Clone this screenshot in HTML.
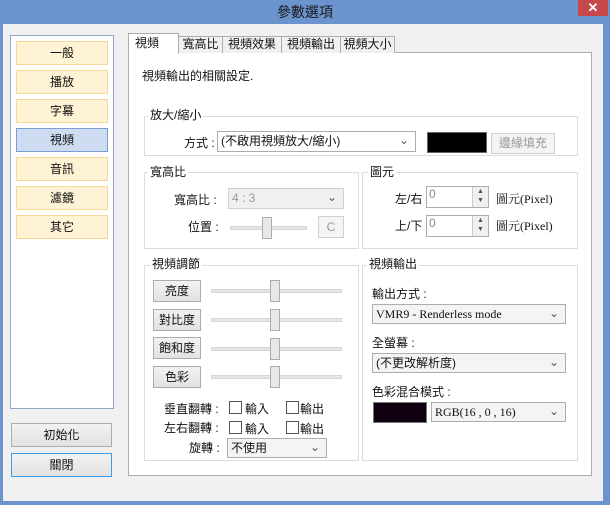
<!DOCTYPE html>
<html><head><meta charset="utf-8"><style>
*{box-sizing:border-box;margin:0;padding:0}
body{width:610px;height:505px;background:#6b93cd;font-family:"Liberation Sans","Noto Sans CJK TC",sans-serif;font-size:12px;color:#111;position:relative;overflow:hidden}
.a{position:absolute}
.content{left:3px;top:24px;width:600px;height:477px;background:#f0f0f0}
.title{left:0;top:0;width:610px;height:24px;text-align:center;line-height:24px;font-size:14px;color:#1a1a1a}
.close{left:578px;top:0;width:30px;height:16px;background:#c7484a;color:#fff;text-align:center;line-height:15px;font-size:13px;font-weight:bold}
.side{left:10px;top:35px;width:104px;height:374px;background:#fff;border:1px solid #8fa5c6}
.sb{left:16px;width:92px;height:24px;background:#fff3d5;border:1px solid #f6d89c;text-align:center;line-height:22px}
.sb.sel{background:#cddcf1;border-color:#7b9fd5}
.btn{background:linear-gradient(#f2f2f2,#e2e2e2);border:1px solid #acacac;text-align:center}
.panel{left:128px;top:52px;width:464px;height:424px;background:#fff;border:1px solid #adadad}
.tab{top:36px;height:17px;border:1px solid #adadad;border-bottom:none;background:#f0f0f0;text-align:center;line-height:15px}
.tab.sel{top:33px;height:21px;background:#fff;z-index:2;text-align:left;padding-left:6px;line-height:18px}
.grp{border:1px solid #dcdcdc}
.gl{background:#fff;padding:0 2px;line-height:14px}
.sel2{background:#fff;border:1px solid #adadad;padding-left:3px;line-height:18px}
.sel2:after{content:"⌄";position:absolute;right:6px;top:-1px;font-size:12px;color:#555}
.dis{background:#f0f0f0;border-color:#d0d0d0;color:#999}
.track{height:4px;background:#e6e6e6;border:1px solid #d6d6d6}
.thumb{width:10px;height:22px;background:#e8e8e8;border:1px solid #acacac}
.cb{width:13px;height:13px;border:1px solid #555;background:#fff}
.serif{font-family:"Liberation Serif","Noto Serif CJK SC",serif}
</style></head><body>
<div class="a title">參數選項</div>
<div class="a close">✕</div>
<div class="a content"></div>
<div class="a side"></div>
<div class="a sb" style="top:41px">一般</div>
<div class="a sb" style="top:70px">播放</div>
<div class="a sb" style="top:99px">字幕</div>
<div class="a sb sel" style="top:128px">視頻</div>
<div class="a sb" style="top:157px">音訊</div>
<div class="a sb" style="top:186px">濾鏡</div>
<div class="a sb" style="top:215px">其它</div>
<div class="a btn" style="left:11px;top:423px;width:101px;height:24px;line-height:22px">初始化</div>
<div class="a btn" style="left:11px;top:453px;width:101px;height:24px;line-height:22px;border-color:#3d9be9">關閉</div>

<div class="a panel"></div>
<div class="a tab sel" style="left:128px;width:51px">視頻</div>
<div class="a tab" style="left:178px;width:45px">寬高比</div>
<div class="a tab" style="left:222px;width:60px">視頻效果</div>
<div class="a tab" style="left:281px;width:60px">視頻輸出</div>
<div class="a tab" style="left:340px;width:55px">視頻大小</div>

<div class="a" style="left:142px;top:67px">視頻輸出的相關設定.</div>

<div class="a grp" style="left:144px;top:116px;width:434px;height:40px"></div>
<div class="a gl" style="left:148px;top:108px">放大/縮小</div>
<div class="a" style="left:184px;top:134px">方式 :</div>
<div class="a sel2" style="left:217px;top:131px;width:199px;height:21px">(不啟用視頻放大/縮小)</div>
<div class="a" style="left:427px;top:132px;width:60px;height:21px;background:#000;border:1px solid #666"></div>
<div class="a btn dis" style="left:491px;top:133px;width:64px;height:21px;line-height:19px;background:#f4f4f4">邊緣填充</div>

<div class="a grp" style="left:144px;top:172px;width:215px;height:77px"></div>
<div class="a gl" style="left:148px;top:165px">寬高比</div>
<div class="a" style="left:174px;top:191px">寬高比 :</div>
<div class="a sel2 dis" style="left:228px;top:188px;width:116px;height:21px">4 : 3</div>
<div class="a" style="left:188px;top:218px">位置 :</div>
<div class="a track" style="left:230px;top:226px;width:77px"></div>
<div class="a thumb" style="left:262px;top:217px"></div>
<div class="a btn dis" style="left:318px;top:216px;width:26px;height:22px;line-height:20px;background:#f4f4f4">C</div>

<div class="a grp" style="left:362px;top:172px;width:216px;height:77px"></div>
<div class="a gl" style="left:368px;top:165px">圖元</div>
<div class="a" style="left:395px;top:190px">左/右 :</div>
<div class="a" style="left:426px;top:186px;width:63px;height:22px;border:1px solid #adadad;background:#fff;color:#888;padding-left:2px;line-height:14px">0</div>
<div class="a" style="left:472px;top:187px;width:16px;height:20px;background:#f0f0f0;border-left:1px solid #ccc;font-size:7px;text-align:center;line-height:9px;color:#555">▲<br>▼</div>
<div class="a serif" style="left:496px;top:190px">圖元(Pixel)</div>
<div class="a" style="left:395px;top:217px">上/下 :</div>
<div class="a" style="left:426px;top:215px;width:63px;height:22px;border:1px solid #adadad;background:#fff;color:#888;padding-left:2px;line-height:14px">0</div>
<div class="a" style="left:472px;top:216px;width:16px;height:20px;background:#f0f0f0;border-left:1px solid #ccc;font-size:7px;text-align:center;line-height:9px;color:#555">▲<br>▼</div>
<div class="a serif" style="left:496px;top:217px">圖元(Pixel)</div>

<div class="a grp" style="left:144px;top:265px;width:215px;height:196px"></div>
<div class="a gl" style="left:150px;top:257px">視頻調節</div>
<div class="a btn" style="left:153px;top:280px;width:48px;height:22px;line-height:20px">亮度</div>
<div class="a btn" style="left:153px;top:309px;width:48px;height:22px;line-height:20px">對比度</div>
<div class="a btn" style="left:153px;top:337px;width:48px;height:22px;line-height:20px">飽和度</div>
<div class="a btn" style="left:153px;top:366px;width:48px;height:22px;line-height:20px">色彩</div>
<div class="a track" style="left:211px;top:289px;width:131px"></div>
<div class="a track" style="left:211px;top:318px;width:131px"></div>
<div class="a track" style="left:211px;top:347px;width:131px"></div>
<div class="a track" style="left:211px;top:375px;width:131px"></div>
<div class="a thumb" style="left:270px;top:280px"></div>
<div class="a thumb" style="left:270px;top:309px"></div>
<div class="a thumb" style="left:270px;top:338px"></div>
<div class="a thumb" style="left:270px;top:366px"></div>
<div class="a" style="left:164px;top:400px">垂直翻轉 :</div>
<div class="a cb" style="left:229px;top:401px"></div><div class="a" style="left:245px;top:400px">輸入</div>
<div class="a cb" style="left:286px;top:401px"></div><div class="a" style="left:300px;top:400px">輸出</div>
<div class="a" style="left:164px;top:419px">左右翻轉 :</div>
<div class="a cb" style="left:229px;top:421px"></div><div class="a" style="left:245px;top:420px">輸入</div>
<div class="a cb" style="left:286px;top:421px"></div><div class="a" style="left:300px;top:420px">輸出</div>
<div class="a" style="left:189px;top:439px">旋轉 :</div>
<div class="a sel2" style="left:227px;top:438px;width:100px;height:20px;background:#f4f4f4">不使用</div>

<div class="a grp" style="left:362px;top:265px;width:216px;height:196px"></div>
<div class="a gl" style="left:367px;top:257px">視頻輸出</div>
<div class="a" style="left:372px;top:285px">輸出方式 :</div>
<div class="a sel2 serif" style="left:372px;top:304px;width:194px;height:20px;background:#f4f4f4">VMR9 - Renderless mode</div>
<div class="a" style="left:372px;top:334px">全螢幕 :</div>
<div class="a sel2" style="left:372px;top:353px;width:194px;height:20px;background:#f4f4f4">(不更改解析度)</div>
<div class="a" style="left:372px;top:383px">色彩混合模式 :</div>
<div class="a" style="left:373px;top:402px;width:54px;height:21px;background:#10000f;border:1px solid #777"></div>
<div class="a sel2 serif" style="left:431px;top:402px;width:135px;height:20px;background:#f4f4f4">RGB(16 , 0 , 16)</div>
</body></html>
